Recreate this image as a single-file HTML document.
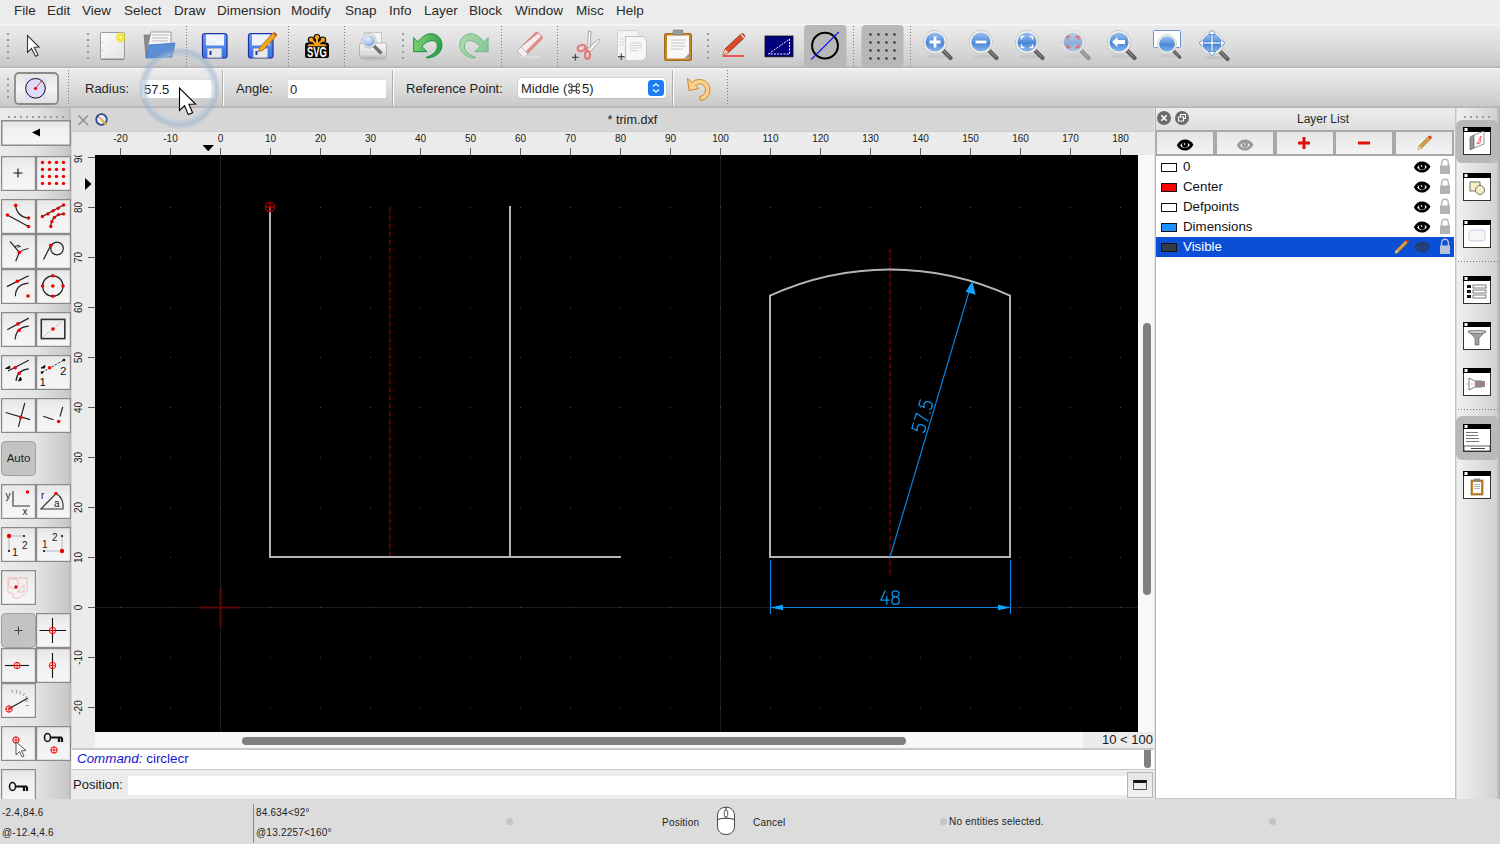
<!DOCTYPE html>
<html><head><meta charset="utf-8">
<style>
*{box-sizing:border-box;margin:0;padding:0}
html,body{width:1500px;height:844px;overflow:hidden;background:#ececec;font-family:"Liberation Sans",sans-serif;color:#222}
.a{position:absolute}
#menubar{left:0;top:0;width:1500px;height:24px;background:#ececec}
#menubar span{position:absolute;top:3px;font-size:13.5px;color:#2a2a2a;white-space:pre}
#tb1{left:0;top:24px;width:1500px;height:44px;background:linear-gradient(#f6f6f6 0px,#f6f6f6 1px,#ebebeb 2px,#dcdcdc 22px,#c9c9c9 42px,#b3b3b3 43px,#b3b3b3 44px)}
#tb2{left:0;top:68px;width:1500px;height:40px;background:linear-gradient(#f4f4f4 0px,#f4f4f4 1px,#ececec 2px,#dcdcdc 20px,#c9c9c9 38px,#b3b3b3 39px,#b3b3b3 40px)}
.vdots{position:absolute;width:2px;background:repeating-linear-gradient(#909090 0 1px,transparent 1px 3px)}
.hdots{position:absolute;height:2px;background:repeating-linear-gradient(90deg,#8e8e8e 0 2px,transparent 2px 6px)}
.lbl{position:absolute;font-size:13px;color:#1e1e1e;white-space:pre}
.inp{position:absolute;background:#fff;border-top:1px solid #d8d8d8;box-shadow:0 0 0 0.5px #d0d0d0}
#left{left:0;top:108px;width:71px;height:691px;background:linear-gradient(90deg,#ebebeb,#e3e3e3 50%,#c9c9c9 95%,#b9b9b9)}
.btn{position:absolute;width:35px;height:35px;border:1.5px solid #8c8c8c;background:linear-gradient(#e9e9e9,#f3f3f3 60%,#f6f6f6)}
#mdi{left:72px;top:108px;width:1083px;height:640px;background:#ebebeb}
#mdititle{left:72px;top:108px;width:1083px;height:24px;background:#d6d6d6;border-bottom:1px solid #cfcfcf}
#canvas{left:95px;top:155px;width:1043px;height:577px;background:#000;overflow:hidden}
#status{left:0;top:799px;width:1500px;height:45px;background:#dcdcdc}
#layers{left:1155px;top:108px;width:300px;height:691px;background:#ececec}
#right{left:1455px;top:108px;width:45px;height:691px;background:linear-gradient(90deg,#c4c4c4 0,#c4c4c4 1px,#f0f0f0 2px,#e2e2e2 45%,#d2d2d2 92%,#a9a9a9 100%)}
</style></head><body>
<div id="menubar" class="a">
<span style="left:14px">File</span><span style="left:47px">Edit</span><span style="left:82px">View</span><span style="left:124px">Select</span><span style="left:174px">Draw</span><span style="left:217px">Dimension</span><span style="left:291px">Modify</span><span style="left:345px">Snap</span><span style="left:389px">Info</span><span style="left:424px">Layer</span><span style="left:469px">Block</span><span style="left:515px">Window</span><span style="left:576px">Misc</span><span style="left:616px">Help</span>
</div>
<div id="tb1" class="a"></div>
<!--TB1--><svg class="a" style="left:0;top:24px" width="1500" height="44" viewBox="0 24 1500 44">
<defs>
<linearGradient id="gPage" x1="0" y1="0" x2="1" y2="1"><stop offset="0" stop-color="#fdfdfd"/><stop offset="1" stop-color="#e2e2e2"/></linearGradient>
<linearGradient id="gBlue" x1="0" y1="0" x2="0" y2="1"><stop offset="0" stop-color="#9cc2f0"/><stop offset="0.45" stop-color="#5b93dc"/><stop offset="0.55" stop-color="#4a86d6"/><stop offset="1" stop-color="#8ab6ec"/></linearGradient>
<linearGradient id="gFloppy" x1="0" y1="0" x2="0" y2="1"><stop offset="0" stop-color="#6aa0f0"/><stop offset="1" stop-color="#3a70e0"/></linearGradient>
<radialGradient id="gGlow"><stop offset="0" stop-color="#ffffc0"/><stop offset="0.45" stop-color="#f0e020"/><stop offset="1" stop-color="#f0e020" stop-opacity="0"/></radialGradient>
<g id="mag"><ellipse cx="3" cy="14.5" rx="11" ry="1.8" fill="#000" opacity="0.06"/><path d="M7.5,8L15.5,16" stroke="#5e5e5e" stroke-width="4.2" stroke-linecap="round"/><path d="M8.5,8.5L14.5,14.8" stroke="#9a9a9a" stroke-width="1" stroke-linecap="round"/><circle cx="0" cy="0" r="11.6" fill="#f3f3ef" stroke="#c4c4bc" stroke-width="0.9"/><circle cx="0" cy="0" r="9.6" fill="url(#gBlue)"/></g>
</defs>
<g fill="#9a9a9a"><rect x="7" y="33" width="2" height="2"/><rect x="7" y="39" width="2" height="2"/><rect x="7" y="45" width="2" height="2"/><rect x="7" y="51" width="2" height="2"/><rect x="7" y="57" width="2" height="2"/>
<rect x="87" y="33" width="2" height="2"/><rect x="87" y="39" width="2" height="2"/><rect x="87" y="45" width="2" height="2"/><rect x="87" y="51" width="2" height="2"/><rect x="87" y="57" width="2" height="2"/>
<rect x="402" y="33" width="2" height="2"/><rect x="402" y="39" width="2" height="2"/><rect x="402" y="45" width="2" height="2"/><rect x="402" y="51" width="2" height="2"/><rect x="402" y="57" width="2" height="2"/>
<rect x="707" y="33" width="2" height="2"/><rect x="707" y="39" width="2" height="2"/><rect x="707" y="45" width="2" height="2"/><rect x="707" y="51" width="2" height="2"/><rect x="707" y="57" width="2" height="2"/>
</g>
<g stroke="#7a7a7a" stroke-width="1" stroke-dasharray="1 2"><path d="M186.5,26V66M288.5,26V66M344.5,26V66M501.5,26V66M557.5,26V66M853.5,26V66M910.5,26V66"/></g>
<!-- pointer -->
<path d="M27.5,35.5V52.5L31.5,48.5 35.5,56.2 38,55 34.2,47.2 39,47Z" fill="#fff" stroke="#333" stroke-width="1.1" stroke-linejoin="miter"/>
<!-- new -->
<rect x="100.5" y="32.5" width="24" height="27" rx="1" fill="url(#gPage)" stroke="#9a9a9a" stroke-width="1"/>
<rect x="101" y="58.5" width="23" height="1.5" fill="#8a8a8a"/>
<circle cx="120.8" cy="37.5" r="6" fill="url(#gGlow)"/>
<g fill="#aaa"><rect x="102" y="42" width="1" height="1"/><rect x="102" y="50" width="1" height="1"/></g>
<!-- open -->
<path d="M144,35H151L152,37V57H146Z" fill="#8a8a8a" stroke="#6a6a6a" stroke-width="0.6"/>
<path d="M151,32H171V46L147,50Z" fill="#f6f6f6" stroke="#888" stroke-width="0.8"/>
<path d="M152,35H169M152,38H168M152,41H168" stroke="#bbb" stroke-width="1"/>
<path d="M149,45L175,43 172,57 146,58Z" fill="#5a8fd6" stroke="#3f74bf" stroke-width="0.8"/>
<!-- save -->
<rect x="202.5" y="33.5" width="24.5" height="24.5" rx="2.5" fill="url(#gFloppy)" stroke="#2030a0" stroke-width="1.2"/>
<rect x="206" y="34.5" width="18" height="11" fill="#eef2fb"/>
<path d="M207,36L221,43" stroke="#fff" stroke-width="1"/>
<rect x="207.5" y="48.5" width="14" height="9" fill="#e8e8e8" stroke="#c0c0c0" stroke-width="0.6"/>
<rect x="209.5" y="51" width="2" height="4" fill="#1a38b0"/>
<!-- save as -->
<rect x="248.5" y="33.5" width="24.5" height="24.5" rx="2.5" fill="url(#gFloppy)" stroke="#2030a0" stroke-width="1.2"/>
<rect x="252" y="34.5" width="18" height="11" fill="#eef2fb"/>
<rect x="253.5" y="48.5" width="14" height="9" fill="#e8e8e8" stroke="#c0c0c0" stroke-width="0.6"/>
<rect x="255.5" y="51" width="2" height="4" fill="#1a38b0"/>
<path d="M258.5,51.5L259.5,47.5 272.5,33.5C273.5,32.5 275,32.5 276,33.5 276.8,34.4 276.8,35.6 276,36.4L263,50.2Z" fill="#f5a623" stroke="#9a4a00" stroke-width="0.7"/>
<path d="M272.5,33.5L276,36.4 276,33.5Z" fill="#e04040"/>
<!-- svg -->
<g stroke="#0a0a0a" stroke-width="4.4" stroke-linecap="round" fill="#0a0a0a">
<path d="M317,45V37.3M317,45L311.1,39.8M317,45L322.9,39.8M307.5,44.8H326.5" fill="none"/>
<circle cx="317" cy="37.3" r="2.4" stroke-width="2"/><circle cx="311.1" cy="39.8" r="2.4" stroke-width="2"/><circle cx="322.9" cy="39.8" r="2.4" stroke-width="2"/>
</g>
<rect x="305" y="43" width="24" height="15" rx="2.6" fill="#0a0a0a"/>
<g stroke="#f9a51a" stroke-width="2" stroke-linecap="round" fill="#f9a51a">
<path d="M317,45V37.3M317,45L311.1,39.8M317,45L322.9,39.8" fill="none"/>
<circle cx="317" cy="37.3" r="2.2" stroke="none"/><circle cx="311.1" cy="39.8" r="2.2" stroke="none"/><circle cx="322.9" cy="39.8" r="2.2" stroke="none"/>
</g>
<path d="M307.2,46.2C308,44.5 309,44.2 310,44.2H324C325,44.2 326,44.5 326.8,46.2Z" fill="#f9a51a"/>
<text transform="translate(317,57.3) scale(0.66,1)" font-family="Liberation Sans" font-weight="bold" font-size="14.2" fill="#fff" text-anchor="middle">SVG</text>
<!-- print preview -->
<defs><radialGradient id="gLens" cx="0.4" cy="0.35" r="0.7"><stop offset="0" stop-color="#e8f0fb"/><stop offset="0.6" stop-color="#a9c6ee"/><stop offset="1" stop-color="#6f9bd8"/></radialGradient>
<linearGradient id="gPr" x1="0" y1="0" x2="0" y2="1"><stop offset="0" stop-color="#f8f8f8"/><stop offset="0.7" stop-color="#e2e2e2"/><stop offset="1" stop-color="#b8b8b8"/></linearGradient></defs>
<rect x="364.5" y="32.5" width="17" height="13" fill="#f4f4f4" stroke="#bcbcbc" stroke-width="0.8"/>
<path d="M359.5,46C359.5,44 360.5,43 362,43H384C385.5,43 386.5,44 386.5,46V55.5C386.5,57 385.5,58 384,58H362C360.5,58 359.5,57 359.5,55.5Z" fill="url(#gPr)" stroke="#a8a8a8" stroke-width="0.8"/>
<path d="M360,52H386" stroke="#c8c8c8" stroke-width="0.8"/>
<ellipse cx="373" cy="59.5" rx="13" ry="1.2" fill="#000" opacity="0.08"/>
<path d="M373.5,45.5L380.5,52.5" stroke="#6e6e6e" stroke-width="3.2" stroke-linecap="round"/>
<circle cx="369" cy="40.8" r="7.2" fill="#f0f0ee" stroke="#a8a8a8" stroke-width="0.7"/>
<circle cx="369" cy="40.8" r="5.6" fill="url(#gLens)"/>
<!-- undo -->
<defs><linearGradient id="gU" x1="0" y1="0" x2="1" y2="0.3"><stop offset="0" stop-color="#8ad67a"/><stop offset="1" stop-color="#2ea44a"/></linearGradient>
<linearGradient id="gR" x1="1" y1="0" x2="0" y2="0.3"><stop offset="0" stop-color="#b0dca8"/><stop offset="1" stop-color="#88c898"/></linearGradient></defs>
<path d="M413.7,37.6L417.6,42.1C421,38 425.5,33.7 430.8,33.7 437,33.7 442,38.5 442,45 442,52 436,57.5 427.2,58L426,57.4C432,55.5 437.4,51.5 437.4,46 437.4,42.5 435,40.6 432,40.6 428,40.6 424.5,43.5 421.8,46.3L426.9,51.7H413.7Z" fill="url(#gU)" stroke="#17843a" stroke-width="0.9" stroke-linejoin="round"/>
<g transform="translate(901.8,0) scale(-1,1)"><path d="M413.7,37.6L417.6,42.1C421,38 425.5,33.7 430.8,33.7 437,33.7 442,38.5 442,45 442,52 436,57.5 427.2,58L426,57.4C432,55.5 437.4,51.5 437.4,46 437.4,42.5 435,40.6 432,40.6 428,40.6 424.5,43.5 421.8,46.3L426.9,51.7H413.7Z" fill="url(#gR)" stroke="#6ab486" stroke-width="0.9" stroke-linejoin="round"/></g>
<!-- eraser -->
<path d="M517,51L535,33C536,32 537.5,32 538.5,33L541.5,36C542.5,37 542.5,38.5 541.5,39.5L523.5,57.5Z" fill="#e49090" stroke="#c06a6a" stroke-width="0.7"/>
<path d="M520.5,47.5L538.5,33.5 541,36 524,53Z" fill="#f5f5f5" opacity="0.9"/>
<path d="M517,51L521,47 528,54 524,58Z" fill="#f0f0f0" stroke="#aaa" stroke-width="0.6"/>
<ellipse cx="530" cy="57" rx="11" ry="1.3" fill="#ddd"/>
<!-- cut -->
<path d="M587,53L588.5,31 591,31.5 590,49M588,48L599,39 600,41 591,51" fill="#f6f6f6" stroke="#999" stroke-width="0.8"/>
<ellipse cx="581.5" cy="48" rx="4" ry="3" fill="none" stroke="#e07a7a" stroke-width="2.2" transform="rotate(-20 581.5 48)"/>
<ellipse cx="587.5" cy="55" rx="2.5" ry="4" fill="none" stroke="#e07a7a" stroke-width="2.2"/>
<path d="M585.5,47.5L588,51" stroke="#e07a7a" stroke-width="2"/>
<path d="M572,57.3H578.6M575.3,54V60.6" stroke="#333" stroke-width="1"/>
<!-- copy -->
<path d="M617.5,30.5H635.5L638.5,33.5V57H617.5Z" fill="#f3f3f3" stroke="#c8c8c8" stroke-width="0.7"/>
<path d="M625.5,36.5H643L646.5,40V57L643,60.8H628C626.5,60.8 625.5,59.8 625.5,58.3Z" fill="#f6f6f6" stroke="#b8b8b8" stroke-width="0.8"/>
<path d="M630,43H642M630,45.5H642M630,48H642M630,50.5H638" stroke="#c4c4c4" stroke-width="0.7"/>
<path d="M619.5,39H624M619.5,42H624M619.5,45H624" stroke="#d0d0d0" stroke-width="0.7"/>
<path d="M618,56.7H624.6M621.3,53.4V60" stroke="#333" stroke-width="1"/>
<!-- paste -->
<rect x="664.5" y="33.5" width="27" height="27" rx="1.5" fill="#c8861c" stroke="#8a5a10" stroke-width="0.8"/>
<rect x="667" y="35.5" width="22" height="23" fill="#f8f8f8"/>
<rect x="673" y="30" width="10" height="5" rx="1" fill="#9a9a9a" stroke="#707070" stroke-width="0.5"/>
<path d="M671,40H686M671,43H685M671,46H686M671,49H683" stroke="#b8b8b8" stroke-width="0.8"/>
<path d="M684,58.5L689,53.5V58.5Z" fill="#9a9a9a"/>
<!-- pencil -->
<path d="M723,55L725,49 740.5,34.5C741.5,33.5 743,33.5 744,34.5 745,35.5 745,37 744,38L728.5,52.5Z" fill="#e04a2a" stroke="#6a2a10" stroke-width="0.8"/>
<path d="M741,34.5L744.5,38" stroke="#ddd" stroke-width="1.5"/>
<path d="M723,55L725,49 728.5,52.5Z" fill="#f0d090"/>
<path d="M722.5,56H744" stroke="#f00" stroke-width="1.2"/>
<!-- dim triangle -->
<rect x="765" y="36" width="28" height="20.8" fill="#00007a" stroke="#111" stroke-width="0.8"/>
<path d="M768.5,54L789.5,39V54Z" fill="none" stroke="#fff" stroke-width="1" stroke-dasharray="2 1.2"/>
<!-- active bgs -->
<rect x="804" y="25" width="42.5" height="42" rx="4" fill="#b8b8b8"/>
<rect x="861.5" y="25" width="42" height="42" rx="4" fill="#b8b8b8"/>
<circle cx="825" cy="45.7" r="12.9" fill="none" stroke="#000" stroke-width="2"/>
<path d="M811.2,59.5L838.8,32" stroke="#1515f0" stroke-width="1.1"/>
<g fill="#111">
<rect x="869.5" y="33.5" width="2" height="2"/><rect x="877.5" y="33.5" width="2" height="2"/><rect x="885.5" y="33.5" width="2" height="2"/><rect x="893.5" y="33.5" width="2" height="2"/>
<rect x="869.5" y="41.5" width="2" height="2"/><rect x="877.5" y="41.5" width="2" height="2"/><rect x="885.5" y="41.5" width="2" height="2"/><rect x="893.5" y="41.5" width="2" height="2"/>
<rect x="869.5" y="49.5" width="2" height="2"/><rect x="877.5" y="49.5" width="2" height="2"/><rect x="885.5" y="49.5" width="2" height="2"/><rect x="893.5" y="49.5" width="2" height="2"/>
<rect x="869.5" y="57.5" width="2" height="2"/><rect x="877.5" y="57.5" width="2" height="2"/><rect x="885.5" y="57.5" width="2" height="2"/><rect x="893.5" y="57.5" width="2" height="2"/>
</g>
<!-- zoom icons -->
<use href="#mag" x="935" y="42"/>
<path d="M935,36.5V47.5M929.5,42H940.5" stroke="#fff" stroke-width="2.8"/>
<use href="#mag" x="981" y="42"/>
<path d="M975.5,42H986.5" stroke="#fff" stroke-width="2.8"/>
<use href="#mag" x="1027" y="42"/>
<path d="M1021.5,39.5V36.5H1024.5M1029.5,36.5H1032.5V39.5M1032.5,44.5V47.5H1029.5M1024.5,47.5H1021.5V44.5" fill="none" stroke="#fff" stroke-width="1.6"/>
<g opacity="0.55"><use href="#mag" x="1073" y="42"/></g>
<path d="M1067.5,39.5V36.5H1070.5M1075.5,36.5H1078.5V39.5M1078.5,44.5V47.5H1075.5M1070.5,47.5H1067.5V44.5" fill="none" stroke="#f06060" stroke-width="1.6"/>
<use href="#mag" x="1119" y="42"/>
<path d="M1112,42L1117.5,37V40H1125V44H1117.5V47Z" fill="#fff"/>
<rect x="1153.5" y="30.5" width="27" height="17" rx="1" fill="#fff" stroke="#5a8ad0" stroke-width="0.9"/>
<g transform="translate(1167,44) scale(0.82)"><use href="#mag" x="0" y="0"/></g>
<use href="#mag" x="1212" y="43"/>
<g stroke="#3c78c8" stroke-width="0.7" fill="#fff" stroke-linejoin="round"><path d="M1211,34H1213V42H1221V44H1213V52H1211V44H1203V42H1211Z"/><path d="M1212,30L1208.5,34.5H1215.5ZM1212,56L1208.5,51.5H1215.5ZM1199,43L1203.5,39.5V46.5ZM1225,43L1220.5,39.5V46.5Z"/></g>
</svg>
<!--/TB1-->
<div id="tb2" class="a"></div>
<!--TB2--><svg class="a" style="left:0;top:68px" width="760" height="40" viewBox="0 68 760 40">
<g fill="#9a9a9a"><rect x="7" y="78" width="2" height="2"/><rect x="7" y="84" width="2" height="2"/><rect x="7" y="90" width="2" height="2"/><rect x="7" y="96" width="2" height="2"/></g>
<path d="M68.5,70V106M727.5,70V106" stroke="#7a7a7a" stroke-width="1" stroke-dasharray="1 2"/>
<path d="M222.5,70V106M392.5,70V106M672.5,70V106" stroke="#b0b0b0" stroke-width="1"/>
<path d="M223.5,70V106M393.5,70V106M673.5,70V106" stroke="#fafafa" stroke-width="1"/>
<defs><linearGradient id="gBtn" x1="0" y1="0" x2="0" y2="1"><stop offset="0" stop-color="#e4e4e4"/><stop offset="0.5" stop-color="#f4f4f4"/><stop offset="1" stop-color="#e0e0e0"/></linearGradient></defs>
<rect x="15" y="73" width="43" height="31" rx="4" fill="url(#gBtn)" stroke="#8a8a8a" stroke-width="1.8"/>
<rect x="25" y="78" width="21" height="21" fill="#dcdcfa"/>
<circle cx="35.5" cy="88.3" r="9.8" fill="none" stroke="#111" stroke-width="1"/>
<path d="M35.5,88.5L42,80.5" stroke="#e82020" stroke-width="0.9"/>
<circle cx="35.5" cy="88.5" r="1.6" fill="#e80000"/>
</svg>
<div class="lbl" style="left:85px;top:81px">Radius:</div>
<div class="a" style="left:142px;top:79px;width:73px;height:19px;background:#fff;border-top:1px solid #dedede"></div>
<div class="lbl" style="left:144px;top:82px">57.5</div>
<div class="lbl" style="left:236px;top:81px">Angle:</div>
<div class="a" style="left:288px;top:79px;width:98px;height:19px;background:#fff;border-top:1px solid #dedede"></div>
<div class="lbl" style="left:290px;top:82px">0</div>
<div class="lbl" style="left:406px;top:81px">Reference Point:</div>
<div class="a" style="left:518px;top:78px;width:148px;height:20px;background:#fff;border-radius:4px;box-shadow:0 0 0 0.6px #c8c8c8,0 0.5px 1px #bbb"></div>
<div class="lbl" style="left:521px;top:81px">Middle (</div><svg class="a" style="left:567.5px;top:83.3px" width="12.2" height="10.5" viewBox="0 0 14 12"><g fill="none" stroke="#1e1e1e" stroke-width="1.1"><path d="M4.5,3.8H9.5V8.8H4.5Z"/><path d="M4.5,3.8V2.6A1.9,1.9 0 1 0 2.6,4.5H4.5M9.5,3.8V2.6A1.9,1.9 0 1 1 11.4,4.5H9.5M4.5,8.8V10A1.9,1.9 0 1 1 2.6,8.1H4.5M9.5,8.8V10A1.9,1.9 0 1 0 11.4,8.1H9.5"/></g></svg><div class="lbl" style="left:582px;top:81px">5)</div>
<div class="a" style="left:648px;top:80px;width:16px;height:16px;background:#1b7cf4;border-radius:3.5px"></div>
<svg class="a" style="left:648px;top:80px" width="16" height="16" viewBox="0 0 16 16"><path d="M5,6.5L8,3.8 11,6.5M5,9.5L8,12.2 11,9.5" fill="none" stroke="#fff" stroke-width="1.2"/></svg>
<svg class="a" style="left:685px;top:75px" width="28" height="28" viewBox="0 0 28 28"><path d="M2.5,3.5L4,15.5 14,13.5 10.5,10.5C11.5,9.5 13,9 14.5,9 18,9 20.5,11.5 20.5,15 20.5,18.5 18,21 14.5,21.5L15.5,25.5C21,25 25,20.5 25,15 25,9 20.5,4.5 14.5,4.5 11.5,4.5 9,5.5 7,7.5Z" fill="#fbd08c" stroke="#c88a30" stroke-width="1"/></svg>
<!--/TB2-->
<div id="left" class="a"></div><!--LEFT--><svg class="a" style="left:0;top:108px" width="72" height="691" viewBox="0 108 72 691"><defs><linearGradient id="lb" x1="0" y1="0" x2="0" y2="1"><stop offset="0" stop-color="#e6e6e6"/><stop offset="0.35" stop-color="#f0f0f0"/><stop offset="1" stop-color="#f6f6f6"/></linearGradient></defs><g fill="#9a9a9a"><rect x="8" y="116" width="2" height="2"/><rect x="14" y="116" width="2" height="2"/><rect x="20" y="116" width="2" height="2"/><rect x="26" y="116" width="2" height="2"/><rect x="32" y="116" width="2" height="2"/><rect x="38" y="116" width="2" height="2"/><rect x="44" y="116" width="2" height="2"/><rect x="50" y="116" width="2" height="2"/><rect x="56" y="116" width="2" height="2"/><rect x="62" y="116" width="2" height="2"/></g><rect x="1.75" y="120.75" width="68.5" height="24.5" fill="url(#lb)" stroke="#8c8c8c" stroke-width="1.5"/><path d="M32,132.5L40,128.5V136.5Z" fill="#000"/><rect x="36.6" y="156.6" width="33.8" height="33.8" fill="url(#lb)" stroke="#8a8a8a" stroke-width="1.2"/><rect x="1.6" y="156.6" width="33.8" height="33.8" fill="url(#lb)" stroke="#8a8a8a" stroke-width="1.2"/><rect x="1.6" y="199.6" width="33.8" height="33.8" fill="url(#lb)" stroke="#8a8a8a" stroke-width="1.2"/><rect x="36.6" y="199.6" width="33.8" height="33.8" fill="url(#lb)" stroke="#8a8a8a" stroke-width="1.2"/><rect x="1.6" y="234.6" width="33.8" height="33.8" fill="url(#lb)" stroke="#8a8a8a" stroke-width="1.2"/><rect x="36.6" y="234.6" width="33.8" height="33.8" fill="url(#lb)" stroke="#8a8a8a" stroke-width="1.2"/><rect x="1.6" y="269.6" width="33.8" height="33.8" fill="url(#lb)" stroke="#8a8a8a" stroke-width="1.2"/><rect x="36.6" y="269.6" width="33.8" height="33.8" fill="url(#lb)" stroke="#8a8a8a" stroke-width="1.2"/><rect x="1.6" y="312.6" width="33.8" height="33.8" fill="url(#lb)" stroke="#8a8a8a" stroke-width="1.2"/><rect x="36.6" y="312.6" width="33.8" height="33.8" fill="url(#lb)" stroke="#8a8a8a" stroke-width="1.2"/><rect x="1.6" y="355.6" width="33.8" height="33.8" fill="url(#lb)" stroke="#8a8a8a" stroke-width="1.2"/><rect x="36.6" y="355.6" width="33.8" height="33.8" fill="url(#lb)" stroke="#8a8a8a" stroke-width="1.2"/><rect x="1.6" y="398.6" width="33.8" height="33.8" fill="url(#lb)" stroke="#8a8a8a" stroke-width="1.2"/><rect x="36.6" y="398.6" width="33.8" height="33.8" fill="url(#lb)" stroke="#8a8a8a" stroke-width="1.2"/><rect x="1.6" y="484.6" width="33.8" height="33.8" fill="url(#lb)" stroke="#8a8a8a" stroke-width="1.2"/><rect x="36.6" y="484.6" width="33.8" height="33.8" fill="url(#lb)" stroke="#8a8a8a" stroke-width="1.2"/><rect x="1.6" y="527.6" width="33.8" height="33.8" fill="url(#lb)" stroke="#8a8a8a" stroke-width="1.2"/><rect x="36.6" y="527.6" width="33.8" height="33.8" fill="url(#lb)" stroke="#8a8a8a" stroke-width="1.2"/><rect x="1.6" y="570.6" width="33.8" height="33.8" fill="url(#lb)" stroke="#8a8a8a" stroke-width="1.2"/><rect x="36.6" y="613.6" width="33.8" height="33.8" fill="url(#lb)" stroke="#8a8a8a" stroke-width="1.2"/><rect x="1.6" y="648.6" width="33.8" height="33.8" fill="url(#lb)" stroke="#8a8a8a" stroke-width="1.2"/><rect x="36.6" y="648.6" width="33.8" height="33.8" fill="url(#lb)" stroke="#8a8a8a" stroke-width="1.2"/><rect x="1.6" y="683.6" width="33.8" height="33.8" fill="url(#lb)" stroke="#8a8a8a" stroke-width="1.2"/><rect x="1.6" y="726.6" width="33.8" height="33.8" fill="url(#lb)" stroke="#8a8a8a" stroke-width="1.2"/><rect x="36.6" y="726.6" width="33.8" height="33.8" fill="url(#lb)" stroke="#8a8a8a" stroke-width="1.2"/><rect x="1.6" y="769.6" width="33.8" height="33.8" fill="url(#lb)" stroke="#8a8a8a" stroke-width="1.2"/><rect x="1.5" y="441.5" width="34" height="34" rx="4" fill="#c3c3c3" stroke="#a0a0a0" stroke-width="1"/><text x="18.5" y="462" font-family="Liberation Sans" font-size="11.5" fill="#222" text-anchor="middle">Auto</text><rect x="1.5" y="613.5" width="34" height="34" rx="4" fill="#c3c3c3" stroke="#a0a0a0" stroke-width="1"/><g transform="translate(36,156)"><circle cx="6.5" cy="6.4" r="1.7" fill="#f00000"/><circle cx="6.5" cy="13.4" r="1.7" fill="#f00000"/><circle cx="6.5" cy="20.4" r="1.7" fill="#f00000"/><circle cx="6.5" cy="27.4" r="1.7" fill="#f00000"/><circle cx="13.5" cy="6.4" r="1.7" fill="#f00000"/><circle cx="13.5" cy="13.4" r="1.7" fill="#f00000"/><circle cx="13.5" cy="20.4" r="1.7" fill="#f00000"/><circle cx="13.5" cy="27.4" r="1.7" fill="#f00000"/><circle cx="20.5" cy="6.4" r="1.7" fill="#f00000"/><circle cx="20.5" cy="13.4" r="1.7" fill="#f00000"/><circle cx="20.5" cy="20.4" r="1.7" fill="#f00000"/><circle cx="20.5" cy="27.4" r="1.7" fill="#f00000"/><circle cx="27.5" cy="6.4" r="1.7" fill="#f00000"/><circle cx="27.5" cy="13.4" r="1.7" fill="#f00000"/><circle cx="27.5" cy="20.4" r="1.7" fill="#f00000"/><circle cx="27.5" cy="27.4" r="1.7" fill="#f00000"/></g><g transform="translate(1,156)"><path d="M12.5,17H21.5M17,12.5V21.5" stroke="#111" stroke-width="1.1"/></g><g transform="translate(1,199)"><path d="M6.4,16L27.5,27.5M14.7,6.4C15,13 20,18.5 27.5,19" stroke="#222" stroke-width="1.2" fill="none"/><circle cx="6.4" cy="16" r="1.8" fill="#f00000"/><circle cx="27.5" cy="27.5" r="1.8" fill="#f00000"/><circle cx="14.7" cy="6.4" r="1.8" fill="#f00000"/><circle cx="27.5" cy="19" r="1.8" fill="#f00000"/></g><g transform="translate(36,199)"><path d="M6.4,17.5L27.6,6M14.8,27.5C15,21 18,16 27.6,14.9" stroke="#222" stroke-width="1.2" fill="none"/><circle cx="6.4" cy="17.5" r="1.7" fill="#f00000"/><circle cx="11.8" cy="14.9" r="1.7" fill="#f00000"/><circle cx="17.2" cy="11.8" r="1.7" fill="#f00000"/><circle cx="22.2" cy="9.2" r="1.7" fill="#f00000"/><circle cx="27.6" cy="6" r="1.7" fill="#f00000"/><circle cx="14.8" cy="27.5" r="1.7" fill="#f00000"/><circle cx="15.9" cy="22.6" r="1.7" fill="#f00000"/><circle cx="18.4" cy="18.4" r="1.7" fill="#f00000"/><circle cx="22.5" cy="15.6" r="1.7" fill="#f00000"/><circle cx="27.6" cy="14.9" r="1.7" fill="#f00000"/></g><g transform="translate(1,234)"><path d="M9,7.3L18.3,18.4 14.7,27.2M18.3,18.4C21,16 24,15 27.5,14.5M13.5,13.5C15,11.5 17.5,11 19.5,13" stroke="#222" stroke-width="1.2" fill="none"/><path d="M16.5,13.5h1" stroke="#111" stroke-width="0.8"/><circle cx="18.3" cy="18.4" r="1.8" fill="#f00000"/></g><g transform="translate(36,234)"><circle cx="21" cy="14.5" r="6.3" stroke="#222" stroke-width="1.2" fill="none"/><path d="M7.5,25.6L14.8,11.2" stroke="#222" stroke-width="1.2" fill="none"/><circle cx="14.8" cy="11.2" r="1.8" fill="#f00000"/></g><g transform="translate(1,269)"><path d="M5.9,17.6L27.5,6.8M14.4,27.3C14.5,20 19,15 27.5,14.2" stroke="#222" stroke-width="1.2" fill="none"/><circle cx="16.4" cy="12.2" r="1.8" fill="#f00000"/><circle cx="27" cy="27" r="1.8" fill="#f00000"/></g><g transform="translate(36,269)"><circle cx="16.8" cy="17" r="10.2" stroke="#222" stroke-width="1.2" fill="none"/><circle cx="16.8" cy="17" r="1.8" fill="#f00000"/><circle cx="16.8" cy="6.8" r="1.8" fill="#f00000"/><circle cx="16.8" cy="27.2" r="1.8" fill="#f00000"/><circle cx="6.6" cy="17" r="1.8" fill="#f00000"/><circle cx="27" cy="17" r="1.8" fill="#f00000"/></g><g transform="translate(1,312)"><path d="M6.2,17.8L27.8,6.1M14.2,27.4C14.5,20 18.5,15 27.8,14.1" stroke="#222" stroke-width="1.2" fill="none"/><circle cx="16.9" cy="11.9" r="1.8" fill="#f00000"/><circle cx="18.2" cy="18.3" r="1.8" fill="#f00000"/></g><g transform="translate(36,312)"><rect x="5.3" y="7.4" width="23.5" height="19.2" fill="none" stroke="#333" stroke-width="1.6"/><path d="M6.5,25.5L27.5,8.5" stroke="#888" stroke-width="0.7" stroke-dasharray="1.5 1.5"/><circle cx="17" cy="17" r="1.8" fill="#f00000"/></g><g transform="translate(1,355)"><path d="M7,16L27.8,5.3M15,25.9C15.5,19 19,15 27.8,13.9" stroke="#222" stroke-width="1.2" fill="none"/><path d="M4.5,13.5L9,11 8.5,13.5Z M17.5,26L19.5,22 20.5,25Z" fill="#111" stroke="#111" stroke-width="1"/><circle cx="14.2" cy="12.8" r="1.8" fill="#f00000"/><circle cx="18.2" cy="18.2" r="1.8" fill="#f00000"/></g><g transform="translate(36,355)"><path d="M6.4,17.1L28,5.1" stroke="#222" stroke-width="1" stroke-dasharray="2 1.6"/><path d="M5,13L9,10.5 8.5,13Z" fill="#111" stroke="#111" stroke-width="1"/><circle cx="6" cy="17.5" r="1.3" fill="#111"/><circle cx="28" cy="5" r="1.3" fill="#111"/><circle cx="13.6" cy="12.8" r="1.8" fill="#f00000"/><text x="3.5" y="31" font-family="Liberation Sans" font-size="11.5" fill="#111">1</text><text x="24" y="20" font-family="Liberation Sans" font-size="11.5" fill="#111">2</text></g><g transform="translate(1,398)"><path d="M4.6,14.5L29.1,21.7M23.8,4.9L17.4,28.9" stroke="#222" stroke-width="1.2" fill="none"/><circle cx="19.8" cy="19.3" r="1.8" fill="#f00000"/></g><g transform="translate(36,398)"><path d="M7.2,18.2L17.6,21.7M26.7,8.9L24,18.7" stroke="#222" stroke-width="1.2" fill="none"/><circle cx="22.7" cy="23.5" r="1.8" fill="#f00000"/></g><g transform="translate(1,484)"><path d="M12,7V22H29" fill="none" stroke="#333" stroke-width="1.1"/><text x="4.5" y="15" font-family="Liberation Sans" font-size="10" fill="#222">y</text><text x="21.5" y="31" font-family="Liberation Sans" font-size="10" fill="#222">x</text><circle cx="26.5" cy="8" r="1.7" fill="#f00000"/></g><g transform="translate(36,484)"><path d="M5,25L20,9.5C25,12 28,18 27,25Z" fill="none" stroke="#333" stroke-width="1.1"/><text x="5" y="14.5" font-family="Liberation Sans" font-size="10" fill="#222">r</text><text x="18" y="23" font-family="Liberation Sans" font-size="10" fill="#222">a</text><circle cx="20" cy="9.5" r="1.7" fill="#f00000"/></g><g transform="translate(1,527)"><path d="M8,9H23M8,9V24" stroke="#aaa" stroke-width="0.8"/><circle cx="8" cy="9" r="2.2" fill="#f00000"/><circle cx="23" cy="9" r="1.1" fill="#111"/><circle cx="8" cy="24" r="1.1" fill="#111"/><text x="11" y="29" font-family="Liberation Sans" font-size="11" fill="#222">1</text><text x="21" y="22" font-family="Liberation Sans" font-size="10" fill="#222">2</text></g><g transform="translate(36,527)"><path d="M8,24H26M26,9V24" stroke="#aaa" stroke-width="0.8"/><circle cx="26" cy="24" r="2.2" fill="#f00000"/><circle cx="26" cy="9" r="1.1" fill="#111"/><circle cx="8" cy="24" r="1.1" fill="#111"/><text x="6" y="20.5" font-family="Liberation Sans" font-size="10" fill="#222">1</text><text x="16" y="14" font-family="Liberation Sans" font-size="10" fill="#222">2</text></g><g transform="translate(1,570)"><g opacity="0.45"><path d="M7,8H26V22L19,28H12V23H7Z" fill="none" stroke="#f06060" stroke-width="0.8"/><circle cx="12.5" cy="13.5" r="5" fill="none" stroke="#f06060" stroke-width="0.8"/><path d="M16,22L23,15V22Z" fill="none" stroke="#f06060" stroke-width="0.8"/></g><circle cx="15" cy="17" r="1.7" fill="#f00000"/></g><g transform="translate(36,613)"><path d="M3.5,17.5H30M16.5,5V30" stroke="#111" stroke-width="1.1"/><circle cx="16.5" cy="17.5" r="3.2" fill="none" stroke="#f00000" stroke-width="1"/><path d="M13.3,17.5H19.7M16.5,14.3V20.7" stroke="#f00000" stroke-width="0.8"/></g><g transform="translate(1,648)"><path d="M4,17.5H28" stroke="#111" stroke-width="1.1"/><circle cx="16" cy="17.5" r="3.2" fill="none" stroke="#f00000" stroke-width="1"/><path d="M12.8,17.5H19.2M16,14.3V20.7" stroke="#f00000" stroke-width="0.8"/></g><g transform="translate(36,648)"><path d="M16.5,5V30" stroke="#111" stroke-width="1.1"/><circle cx="16.5" cy="17.5" r="3.2" fill="none" stroke="#f00000" stroke-width="1"/><path d="M13.3,17.5H19.7M16.5,14.3V20.7" stroke="#f00000" stroke-width="0.8"/></g><g transform="translate(1,683)"><path d="M7.5,26L27,15" stroke="#222" stroke-width="1.2"/><path d="M11,6.5L11.5,10M15,6.5L16,10.5M19.5,8L19,11.5M23.5,10L22,13M26,13L24.5,15M27.5,18H24M28,22.5H24.5" stroke="#888" stroke-width="0.8"/><circle cx="8" cy="26" r="3.2" fill="none" stroke="#f00000" stroke-width="1"/><path d="M4.8,26H11.2M8,22.8V29.2" stroke="#f00000" stroke-width="0.8"/></g><g transform="translate(1,726)"><circle cx="15" cy="14" r="3.2" fill="none" stroke="#f00000" stroke-width="1"/><path d="M11.8,14H18.2M15,10.8V17.2" stroke="#f00000" stroke-width="0.8"/><path d="M15,16V29L18.5,25.5 21,31 23,30 20.5,24.8 25,24.5Z" fill="#fff" stroke="#333" stroke-width="0.8"/></g><g transform="translate(36,726)"><g transform="translate(8,7)"><ellipse cx="3.5" cy="4.5" rx="3" ry="4" fill="none" stroke="#111" stroke-width="1.6"/><path d="M6.5,4.5H18M15,4.5V9M18,4.5V9" stroke="#111" stroke-width="2.2"/></g><circle cx="18" cy="24" r="3.2" fill="none" stroke="#f00000" stroke-width="1"/><path d="M14.8,24H21.2M18,20.8V27.2" stroke="#f00000" stroke-width="0.8"/></g><g transform="translate(1,769)"><g transform="translate(8,13)"><ellipse cx="3.5" cy="4.5" rx="3" ry="4" fill="none" stroke="#111" stroke-width="1.6"/><path d="M6.5,4.5H18M15,4.5V9M18,4.5V9" stroke="#111" stroke-width="2.2"/></g></g><g transform="translate(1,613)"><path d="M13.5,17.5H21.5M17.5,13.5V21.5" stroke="#444" stroke-width="1"/></g></svg><!--/LEFT-->
<div id="mdi" class="a"></div>
<div id="mdititle" class="a"></div>
<svg class="a" style="left:95px;top:155px" width="1043" height="577" viewBox="95 155 1043 577">
<rect x="95" y="155" width="1043" height="577" fill="#000"/>
<g fill="#1b1b1b" shape-rendering="crispEdges"><rect x="220" y="155" width="1" height="577"/><rect x="720" y="155" width="1" height="577"/><rect x="95" y="607" width="1043" height="1"/></g>
<path fill="#4a4a4a" shape-rendering="crispEdges" d="M120,157h1v1h-1zM120,207h1v1h-1zM120,257h1v1h-1zM120,307h1v1h-1zM120,357h1v1h-1zM120,407h1v1h-1zM120,457h1v1h-1zM120,507h1v1h-1zM120,557h1v1h-1zM120,607h1v1h-1zM120,657h1v1h-1zM120,707h1v1h-1zM170,157h1v1h-1zM170,207h1v1h-1zM170,257h1v1h-1zM170,307h1v1h-1zM170,357h1v1h-1zM170,407h1v1h-1zM170,457h1v1h-1zM170,507h1v1h-1zM170,557h1v1h-1zM170,607h1v1h-1zM170,657h1v1h-1zM170,707h1v1h-1zM220,157h1v1h-1zM220,207h1v1h-1zM220,257h1v1h-1zM220,307h1v1h-1zM220,357h1v1h-1zM220,407h1v1h-1zM220,457h1v1h-1zM220,507h1v1h-1zM220,557h1v1h-1zM220,607h1v1h-1zM220,657h1v1h-1zM220,707h1v1h-1zM270,157h1v1h-1zM270,207h1v1h-1zM270,257h1v1h-1zM270,307h1v1h-1zM270,357h1v1h-1zM270,407h1v1h-1zM270,457h1v1h-1zM270,507h1v1h-1zM270,557h1v1h-1zM270,607h1v1h-1zM270,657h1v1h-1zM270,707h1v1h-1zM320,157h1v1h-1zM320,207h1v1h-1zM320,257h1v1h-1zM320,307h1v1h-1zM320,357h1v1h-1zM320,407h1v1h-1zM320,457h1v1h-1zM320,507h1v1h-1zM320,557h1v1h-1zM320,607h1v1h-1zM320,657h1v1h-1zM320,707h1v1h-1zM370,157h1v1h-1zM370,207h1v1h-1zM370,257h1v1h-1zM370,307h1v1h-1zM370,357h1v1h-1zM370,407h1v1h-1zM370,457h1v1h-1zM370,507h1v1h-1zM370,557h1v1h-1zM370,607h1v1h-1zM370,657h1v1h-1zM370,707h1v1h-1zM420,157h1v1h-1zM420,207h1v1h-1zM420,257h1v1h-1zM420,307h1v1h-1zM420,357h1v1h-1zM420,407h1v1h-1zM420,457h1v1h-1zM420,507h1v1h-1zM420,557h1v1h-1zM420,607h1v1h-1zM420,657h1v1h-1zM420,707h1v1h-1zM470,157h1v1h-1zM470,207h1v1h-1zM470,257h1v1h-1zM470,307h1v1h-1zM470,357h1v1h-1zM470,407h1v1h-1zM470,457h1v1h-1zM470,507h1v1h-1zM470,557h1v1h-1zM470,607h1v1h-1zM470,657h1v1h-1zM470,707h1v1h-1zM520,157h1v1h-1zM520,207h1v1h-1zM520,257h1v1h-1zM520,307h1v1h-1zM520,357h1v1h-1zM520,407h1v1h-1zM520,457h1v1h-1zM520,507h1v1h-1zM520,557h1v1h-1zM520,607h1v1h-1zM520,657h1v1h-1zM520,707h1v1h-1zM570,157h1v1h-1zM570,207h1v1h-1zM570,257h1v1h-1zM570,307h1v1h-1zM570,357h1v1h-1zM570,407h1v1h-1zM570,457h1v1h-1zM570,507h1v1h-1zM570,557h1v1h-1zM570,607h1v1h-1zM570,657h1v1h-1zM570,707h1v1h-1zM620,157h1v1h-1zM620,207h1v1h-1zM620,257h1v1h-1zM620,307h1v1h-1zM620,357h1v1h-1zM620,407h1v1h-1zM620,457h1v1h-1zM620,507h1v1h-1zM620,557h1v1h-1zM620,607h1v1h-1zM620,657h1v1h-1zM620,707h1v1h-1zM670,157h1v1h-1zM670,207h1v1h-1zM670,257h1v1h-1zM670,307h1v1h-1zM670,357h1v1h-1zM670,407h1v1h-1zM670,457h1v1h-1zM670,507h1v1h-1zM670,557h1v1h-1zM670,607h1v1h-1zM670,657h1v1h-1zM670,707h1v1h-1zM720,157h1v1h-1zM720,207h1v1h-1zM720,257h1v1h-1zM720,307h1v1h-1zM720,357h1v1h-1zM720,407h1v1h-1zM720,457h1v1h-1zM720,507h1v1h-1zM720,557h1v1h-1zM720,607h1v1h-1zM720,657h1v1h-1zM720,707h1v1h-1zM770,157h1v1h-1zM770,207h1v1h-1zM770,257h1v1h-1zM770,307h1v1h-1zM770,357h1v1h-1zM770,407h1v1h-1zM770,457h1v1h-1zM770,507h1v1h-1zM770,557h1v1h-1zM770,607h1v1h-1zM770,657h1v1h-1zM770,707h1v1h-1zM820,157h1v1h-1zM820,207h1v1h-1zM820,257h1v1h-1zM820,307h1v1h-1zM820,357h1v1h-1zM820,407h1v1h-1zM820,457h1v1h-1zM820,507h1v1h-1zM820,557h1v1h-1zM820,607h1v1h-1zM820,657h1v1h-1zM820,707h1v1h-1zM870,157h1v1h-1zM870,207h1v1h-1zM870,257h1v1h-1zM870,307h1v1h-1zM870,357h1v1h-1zM870,407h1v1h-1zM870,457h1v1h-1zM870,507h1v1h-1zM870,557h1v1h-1zM870,607h1v1h-1zM870,657h1v1h-1zM870,707h1v1h-1zM920,157h1v1h-1zM920,207h1v1h-1zM920,257h1v1h-1zM920,307h1v1h-1zM920,357h1v1h-1zM920,407h1v1h-1zM920,457h1v1h-1zM920,507h1v1h-1zM920,557h1v1h-1zM920,607h1v1h-1zM920,657h1v1h-1zM920,707h1v1h-1zM970,157h1v1h-1zM970,207h1v1h-1zM970,257h1v1h-1zM970,307h1v1h-1zM970,357h1v1h-1zM970,407h1v1h-1zM970,457h1v1h-1zM970,507h1v1h-1zM970,557h1v1h-1zM970,607h1v1h-1zM970,657h1v1h-1zM970,707h1v1h-1zM1020,157h1v1h-1zM1020,207h1v1h-1zM1020,257h1v1h-1zM1020,307h1v1h-1zM1020,357h1v1h-1zM1020,407h1v1h-1zM1020,457h1v1h-1zM1020,507h1v1h-1zM1020,557h1v1h-1zM1020,607h1v1h-1zM1020,657h1v1h-1zM1020,707h1v1h-1zM1070,157h1v1h-1zM1070,207h1v1h-1zM1070,257h1v1h-1zM1070,307h1v1h-1zM1070,357h1v1h-1zM1070,407h1v1h-1zM1070,457h1v1h-1zM1070,507h1v1h-1zM1070,557h1v1h-1zM1070,607h1v1h-1zM1070,657h1v1h-1zM1070,707h1v1h-1zM1120,157h1v1h-1zM1120,207h1v1h-1zM1120,257h1v1h-1zM1120,307h1v1h-1zM1120,357h1v1h-1zM1120,407h1v1h-1zM1120,457h1v1h-1zM1120,507h1v1h-1zM1120,557h1v1h-1zM1120,607h1v1h-1zM1120,657h1v1h-1zM1120,707h1v1h-1z"/>
<g stroke="#5c0808" stroke-width="2" fill="none"><path d="M220.5,587V627M200,607.5H240"/></g>
<g stroke="#5e0000" stroke-width="2" fill="none" stroke-dasharray="4.5 1.2 1 1.5">
<path d="M390,207V557"/><path d="M890,249V577"/></g>
<g stroke="#b4b4b4" stroke-width="2" fill="none" stroke-linecap="square">
<path d="M270,207V557H620M510,207V557"/>
<path d="M770,557V295.7A287.5,287.5 0 0 1 1010,295.7V557H770Z"/>
</g>
<g stroke="#a00000" stroke-width="1.3" fill="none"><circle cx="270" cy="207" r="4.5"/><path d="M266,207H274M270,203V211"/></g>
<g stroke="#0a86e2" stroke-width="1.15" fill="none">
<path d="M770.5,560V614M1010.5,560V614M776,607.5H1004"/>
<path d="M890,557L969,292"/>
</g>
<g fill="#12a2ff">
<path d="M770,607.5L783,604.8V610.2Z"/><path d="M1011,607.5L998,604.8V610.2Z"/>
<path d="M972.3,281.3L975.6,294.8 965.6,291.8Z"/>
</g>
<g stroke="#0c96f0" stroke-width="1.25" fill="none" stroke-linecap="round" stroke-linejoin="round">
<g transform="translate(890,604.4)">
<path d="M-5,-13.5L-9.3,-4.2H-1M-3.2,-8V0"/>
<path d="M5.5,-7.6C2.8,-7.6 2,-9.5 2,-10.6 2,-12.3 3.4,-13.6 5.5,-13.6 7.6,-13.6 8.9,-12.3 8.9,-10.6 8.9,-9.5 8.2,-7.6 5.5,-7.6 2.4,-7.6 1.8,-5.2 1.8,-3.6 1.8,-1.4 3.6,0 5.5,0 7.4,0 9.2,-1.4 9.2,-3.6 9.2,-5.2 8.6,-7.6 5.5,-7.6Z"/>
</g>
<g transform="translate(931,419) rotate(-73.45) translate(0.3,-2.4)">
<path d="M-9,-13.3H-14.6L-15.2,-7.3C-14.2,-8.2 -13,-8.5 -12,-8.5 -9.8,-8.5 -8.5,-6.8 -8.5,-4.5 -8.5,-1.8 -10,0 -12.2,0 -13.6,0 -14.8,-0.6 -15.4,-1.6"/>
<path d="M-5,-13.3H1L-3,0"/>
<path d="M4.6,-0.4H5.4"/>
<path d="M15,-13.3H9.4L8.8,-7.3C9.8,-8.2 11,-8.5 12,-8.5 14.2,-8.5 15.5,-6.8 15.5,-4.5 15.5,-1.8 14,0 11.8,0 10.4,0 9.2,-0.6 8.6,-1.6"/>
</g>
</g>
</svg>
<svg class="a" style="left:72px;top:132px" width="1083" height="616" viewBox="72 132 1083 616">
<g font-family="Liberation Sans" font-size="10" fill="#1a1a1a" text-anchor="middle"><text x="120.5" y="142">-20</text><text x="170.5" y="142">-10</text><text x="220.5" y="142">0</text><text x="270.5" y="142">10</text><text x="320.5" y="142">20</text><text x="370.5" y="142">30</text><text x="420.5" y="142">40</text><text x="470.5" y="142">50</text><text x="520.5" y="142">60</text><text x="570.5" y="142">70</text><text x="620.5" y="142">80</text><text x="670.5" y="142">90</text><text x="720.5" y="142">100</text><text x="770.5" y="142">110</text><text x="820.5" y="142">120</text><text x="870.5" y="142">130</text><text x="920.5" y="142">140</text><text x="970.5" y="142">150</text><text x="1020.5" y="142">160</text><text x="1070.5" y="142">170</text><text x="1120.5" y="142">180</text></g>
<path stroke="#5a5a5a" stroke-width="1" d="M120.5,148V155M170.5,148V155M220.5,148V155M270.5,148V155M320.5,148V155M370.5,148V155M420.5,148V155M470.5,148V155M520.5,148V155M570.5,148V155M620.5,148V155M670.5,148V155M720.5,148V155M770.5,148V155M820.5,148V155M870.5,148V155M920.5,148V155M970.5,148V155M1020.5,148V155M1070.5,148V155M1120.5,148V155M88,707.5H95M88,657.5H95M88,607.5H95M88,557.5H95M88,507.5H95M88,457.5H95M88,407.5H95M88,357.5H95M88,307.5H95M88,257.5H95M88,207.5H95M88,157.5H95"/>
<clipPath id="vclip"><rect x="72" y="155" width="23" height="600"/></clipPath><g clip-path="url(#vclip)" font-family="Liberation Sans" font-size="10" fill="#1a1a1a" text-anchor="middle"><text transform="translate(81.5,707.5) rotate(-90)" x="0" y="0">-20</text><text transform="translate(81.5,657.5) rotate(-90)" x="0" y="0">-10</text><text transform="translate(81.5,607.5) rotate(-90)" x="0" y="0">0</text><text transform="translate(81.5,557.5) rotate(-90)" x="0" y="0">10</text><text transform="translate(81.5,507.5) rotate(-90)" x="0" y="0">20</text><text transform="translate(81.5,457.5) rotate(-90)" x="0" y="0">30</text><text transform="translate(81.5,407.5) rotate(-90)" x="0" y="0">40</text><text transform="translate(81.5,357.5) rotate(-90)" x="0" y="0">50</text><text transform="translate(81.5,307.5) rotate(-90)" x="0" y="0">60</text><text transform="translate(81.5,257.5) rotate(-90)" x="0" y="0">70</text><text transform="translate(81.5,207.5) rotate(-90)" x="0" y="0">80</text><text transform="translate(81.5,157.5) rotate(-90)" x="0" y="0">90</text></g>
<path d="M202.5,145H214L208.2,151.2Z" fill="#000"/>
<path d="M85,178V190L91.5,184Z" fill="#000"/>
</svg>

<div class="a" style="left:95px;top:732px;width:1060px;height:16px;background:#f7f7f7"></div>
<div class="a" style="left:1138px;top:155px;width:16px;height:577px;background:#f8f8f8;border-left:1px solid #fdfdfd"></div>
<div class="a" style="left:242px;top:737px;width:664px;height:8px;border-radius:4px;background:#7f7f7f"></div>
<div class="a" style="left:1143px;top:323px;width:8px;height:272px;border-radius:4px;background:#7f7f7f"></div>
<div class="a" style="left:1083px;top:732px;width:72px;height:16px;background:#ebebeb;font-size:13px;line-height:16px;text-align:right;padding-right:2px;color:#1a1a1a">10 &lt; 100</div>
<svg class="a" style="left:76px;top:113px" width="40" height="16" viewBox="0 0 40 16">
<path d="M2.5,2.5L12,12M12,2.5L2.5,12" stroke="#8a8a8a" stroke-width="1.2"/>
<circle cx="25.5" cy="6.5" r="5.3" fill="#e8eef6" stroke="#2d4c8a" stroke-width="1.8"/>
<path d="M22,3.5L26,7" stroke="#d24040" stroke-width="0.8"/>
<path d="M25,6L30,11.5" stroke="#e8b020" stroke-width="2"/>
</svg>
<div class="a" style="left:607.5px;top:112.5px;font-size:12.6px;color:#1a1a1a;white-space:pre">* trim.dxf</div>
<div class="a" style="left:72px;top:748px;width:1083px;height:2px;background:#c9c9c9"></div>
<div class="a" style="left:72px;top:750px;width:1083px;height:20px;background:#fff;border-bottom:1px solid #c6c6c6"></div>
<div class="a" style="left:1144px;top:750px;width:7px;height:18px;border-radius:0 0 3.5px 3.5px;background:#808080"></div>
<div class="a" style="left:77px;top:751px;font-size:13.4px;color:#1515d0;white-space:pre"><i>Command:</i> circlecr</div>
<div class="a" style="left:72px;top:771px;width:1083px;height:28px;background:#ececec"></div>
<div class="a" style="left:73px;top:777px;font-size:13px;color:#1a1a1a">Position:</div>
<div class="a" style="left:128px;top:776px;width:1000px;height:19px;background:#fff"></div>
<div class="a" style="left:1127px;top:772px;width:26px;height:26px;border:1px solid #b5b5b5;background:linear-gradient(#e4e4e4,#f2f2f2)"></div>
<div class="a" style="left:1133px;top:780px;width:14px;height:10px;border:1px solid #555;border-top:3px solid #111;background:#eee"></div>
<div class="a" style="left:71px;top:108px;width:1px;height:640px;background:#d6d6d6"></div>
<div class="a" style="left:1154px;top:108px;width:1px;height:691px;background:#e2e2e2"></div>
<div id="layers" class="a">
<div class="a" style="left:0;top:0;width:300px;height:23px;background:linear-gradient(#ececec,#dedede)"></div>
<div class="a" style="left:2px;top:3px;width:14px;height:14px;border-radius:50%;background:#6b6b6b"></div>
<svg class="a" style="left:2px;top:3px" width="14" height="14" viewBox="0 0 14 14"><path d="M4.3,4.3L9.7,9.7M9.7,4.3L4.3,9.7" stroke="#fff" stroke-width="1.6"/></svg>
<div class="a" style="left:20px;top:3px;width:14px;height:14px;border-radius:50%;background:#6b6b6b"></div>
<svg class="a" style="left:20px;top:3px" width="14" height="14" viewBox="0 0 14 14"><rect x="5.5" y="3.5" width="5" height="4" fill="none" stroke="#fff" stroke-width="1"/><rect x="3.5" y="6" width="5" height="4" fill="#6b6b6b" stroke="#fff" stroke-width="1"/></svg>
<div class="a" style="left:142px;top:4px;font-size:12px;color:#2a2a2a;white-space:pre">Layer List</div>
<div class="a" style="left:1px;top:22px;width:298px;height:26px;background:#a9a9a9"></div>
<div class="a" style="left:2.0px;top:24px;width:56px;height:22px;background:linear-gradient(#e6e6e6,#f3f3f3)"></div><div class="a" style="left:61.8px;top:24px;width:56px;height:22px;background:linear-gradient(#e6e6e6,#f3f3f3)"></div><div class="a" style="left:121.6px;top:24px;width:56px;height:22px;background:linear-gradient(#e6e6e6,#f3f3f3)"></div><div class="a" style="left:181.4px;top:24px;width:56px;height:22px;background:linear-gradient(#e6e6e6,#f3f3f3)"></div><div class="a" style="left:241.2px;top:24px;width:56px;height:22px;background:linear-gradient(#e6e6e6,#f3f3f3)"></div><div class="a" style="left:21px;top:29px"><svg width="18" height="12" viewBox="0 0 18 12"><path d="M0.8,6.3C2.8,2.2 5.8,0.5 9,0.5 12.4,0.5 15.2,2 17.4,5.6 15.4,9.8 12.4,11.6 9,11.6 5.6,11.6 2.8,10.2 0.8,6.3Z" fill="#000"/><path d="M4.2,6.4C5.6,4.5 7.2,3.6 9,3.6 10.8,3.6 12.5,4.4 13.8,6 12.5,8.1 10.8,9 9,9 7.2,9 5.6,8.3 4.2,6.4Z" fill="#fff"/><circle cx="9" cy="5.7" r="3" fill="#000"/><path d="M8.2,3.9L8.9,6.1" stroke="#fff" stroke-width="0.9"/></svg></div>
<div class="a" style="left:81px;top:29px"><svg width="18" height="12" viewBox="0 0 18 12"><path d="M0.8,6.3C2.8,2.2 5.8,0.5 9,0.5 12.4,0.5 15.2,2 17.4,5.6 15.4,9.8 12.4,11.6 9,11.6 5.6,11.6 2.8,10.2 0.8,6.3Z" fill="#9a9a9a"/><path d="M4.2,6.4C5.6,4.5 7.2,3.6 9,3.6 10.8,3.6 12.5,4.4 13.8,6 12.5,8.1 10.8,9 9,9 7.2,9 5.6,8.3 4.2,6.4Z" fill="#f0f0f0"/><circle cx="9" cy="5.7" r="3" fill="#9a9a9a"/><path d="M8.2,3.9L8.9,6.1" stroke="#f0f0f0" stroke-width="0.9"/></svg></div>
<svg class="a" style="left:142px;top:28px" width="14" height="14" viewBox="0 0 14 14"><path d="M7,1V13M1,7H13" stroke="#e01010" stroke-width="3"/></svg>
<svg class="a" style="left:202px;top:28px" width="14" height="14" viewBox="0 0 14 14"><path d="M1,7H13" stroke="#e01010" stroke-width="3"/></svg>
<div class="a" style="left:261px;top:27px"><svg width="16" height="16" viewBox="0 0 16 16"><path d="M2,14.5L3,11 12.6,1.4C13.3,0.8 14.4,1 15,1.6 15.5,2.2 15.5,3 15,3.6L5.4,13.2Z" fill="#d8a040" stroke="#8a5a10" stroke-width="0.6"/><path d="M12.3,1.7L14.7,4.1 15,3.6C15.5,3 15.5,2.2 15,1.6 14.4,1 13.3,0.8 12.6,1.4Z" fill="#e02020"/><path d="M2,14.5L3,11 5.4,13.2Z" fill="#f0d8a8"/></svg></div>
<div class="a" style="left:1px;top:48px;width:299px;height:643px;background:#fff;border-bottom:1px solid #c8c8c8"></div>
</div><div class="a" style="left:1156px;top:237px;width:1297px"></div><div class="a" style="left:1156px;top:157px;width:298px;height:20px;"></div><div class="a" style="left:1161px;top:163px;width:16px;height:9px;background:#fff;border:1.2px solid #111"></div><div class="a" style="left:1183px;top:159px;font-size:13.3px;color:#111;white-space:pre">0</div><div class="a" style="left:1413px;top:159px"><svg width="18" height="12" viewBox="0 0 18 12"><path d="M0.8,6.3C2.8,2.2 5.8,0.5 9,0.5 12.4,0.5 15.2,2 17.4,5.6 15.4,9.8 12.4,11.6 9,11.6 5.6,11.6 2.8,10.2 0.8,6.3Z" fill="#000"/><path d="M4.2,6.4C5.6,4.5 7.2,3.6 9,3.6 10.8,3.6 12.5,4.4 13.8,6 12.5,8.1 10.8,9 9,9 7.2,9 5.6,8.3 4.2,6.4Z" fill="#fff"/><circle cx="9" cy="5.7" r="3" fill="#000"/><path d="M8.2,3.9L8.9,6.1" stroke="#fff" stroke-width="0.9"/></svg></div><div class="a" style="left:1439px;top:158px"><svg width="12" height="17" viewBox="0 0 12 17"><path d="M2.6,8V5.2C2.6,2.8 4,1.2 6,1.2 8,1.2 9.4,2.8 9.4,5.2V8" fill="none" stroke="#b3b3b3" stroke-width="1.4"/><rect x="1" y="7.5" width="10" height="8.5" fill="#b3b3b3"/></svg></div><div class="a" style="left:1156px;top:177px;width:298px;height:20px;"></div><div class="a" style="left:1161px;top:183px;width:16px;height:9px;background:#ff0000;border:1.2px solid #111"></div><div class="a" style="left:1183px;top:179px;font-size:13.3px;color:#111;white-space:pre">Center</div><div class="a" style="left:1413px;top:179px"><svg width="18" height="12" viewBox="0 0 18 12"><path d="M0.8,6.3C2.8,2.2 5.8,0.5 9,0.5 12.4,0.5 15.2,2 17.4,5.6 15.4,9.8 12.4,11.6 9,11.6 5.6,11.6 2.8,10.2 0.8,6.3Z" fill="#000"/><path d="M4.2,6.4C5.6,4.5 7.2,3.6 9,3.6 10.8,3.6 12.5,4.4 13.8,6 12.5,8.1 10.8,9 9,9 7.2,9 5.6,8.3 4.2,6.4Z" fill="#fff"/><circle cx="9" cy="5.7" r="3" fill="#000"/><path d="M8.2,3.9L8.9,6.1" stroke="#fff" stroke-width="0.9"/></svg></div><div class="a" style="left:1439px;top:178px"><svg width="12" height="17" viewBox="0 0 12 17"><path d="M2.6,8V5.2C2.6,2.8 4,1.2 6,1.2 8,1.2 9.4,2.8 9.4,5.2V8" fill="none" stroke="#b3b3b3" stroke-width="1.4"/><rect x="1" y="7.5" width="10" height="8.5" fill="#b3b3b3"/></svg></div><div class="a" style="left:1156px;top:197px;width:298px;height:20px;"></div><div class="a" style="left:1161px;top:203px;width:16px;height:9px;background:#fff;border:1.2px solid #111"></div><div class="a" style="left:1183px;top:199px;font-size:13.3px;color:#111;white-space:pre">Defpoints</div><div class="a" style="left:1413px;top:199px"><svg width="18" height="12" viewBox="0 0 18 12"><path d="M0.8,6.3C2.8,2.2 5.8,0.5 9,0.5 12.4,0.5 15.2,2 17.4,5.6 15.4,9.8 12.4,11.6 9,11.6 5.6,11.6 2.8,10.2 0.8,6.3Z" fill="#000"/><path d="M4.2,6.4C5.6,4.5 7.2,3.6 9,3.6 10.8,3.6 12.5,4.4 13.8,6 12.5,8.1 10.8,9 9,9 7.2,9 5.6,8.3 4.2,6.4Z" fill="#fff"/><circle cx="9" cy="5.7" r="3" fill="#000"/><path d="M8.2,3.9L8.9,6.1" stroke="#fff" stroke-width="0.9"/></svg></div><div class="a" style="left:1439px;top:198px"><svg width="12" height="17" viewBox="0 0 12 17"><path d="M2.6,8V5.2C2.6,2.8 4,1.2 6,1.2 8,1.2 9.4,2.8 9.4,5.2V8" fill="none" stroke="#b3b3b3" stroke-width="1.4"/><rect x="1" y="7.5" width="10" height="8.5" fill="#b3b3b3"/></svg></div><div class="a" style="left:1156px;top:217px;width:298px;height:20px;"></div><div class="a" style="left:1161px;top:223px;width:16px;height:9px;background:#1e90ff;border:1.2px solid #111"></div><div class="a" style="left:1183px;top:219px;font-size:13.3px;color:#111;white-space:pre">Dimensions</div><div class="a" style="left:1413px;top:219px"><svg width="18" height="12" viewBox="0 0 18 12"><path d="M0.8,6.3C2.8,2.2 5.8,0.5 9,0.5 12.4,0.5 15.2,2 17.4,5.6 15.4,9.8 12.4,11.6 9,11.6 5.6,11.6 2.8,10.2 0.8,6.3Z" fill="#000"/><path d="M4.2,6.4C5.6,4.5 7.2,3.6 9,3.6 10.8,3.6 12.5,4.4 13.8,6 12.5,8.1 10.8,9 9,9 7.2,9 5.6,8.3 4.2,6.4Z" fill="#fff"/><circle cx="9" cy="5.7" r="3" fill="#000"/><path d="M8.2,3.9L8.9,6.1" stroke="#fff" stroke-width="0.9"/></svg></div><div class="a" style="left:1439px;top:218px"><svg width="12" height="17" viewBox="0 0 12 17"><path d="M2.6,8V5.2C2.6,2.8 4,1.2 6,1.2 8,1.2 9.4,2.8 9.4,5.2V8" fill="none" stroke="#b3b3b3" stroke-width="1.4"/><rect x="1" y="7.5" width="10" height="8.5" fill="#b3b3b3"/></svg></div><div class="a" style="left:1156px;top:237px;width:298px;height:20px;background:#0a4fd6;"></div><div class="a" style="left:1161px;top:243px;width:16px;height:9px;background:#333a48;border:1.2px solid #111"></div><div class="a" style="left:1183px;top:239px;font-size:13.3px;color:#fff;white-space:pre">Visible</div><div class="a" style="left:1393px;top:239px"><svg width="16" height="16" viewBox="0 0 16 16"><path d="M2,14.5L3,11 12.6,1.4C13.3,0.8 14.4,1 15,1.6 15.5,2.2 15.5,3 15,3.6L5.4,13.2Z" fill="#d8a040" stroke="#8a5a10" stroke-width="0.6"/><path d="M12.3,1.7L14.7,4.1 15,3.6C15.5,3 15.5,2.2 15,1.6 14.4,1 13.3,0.8 12.6,1.4Z" fill="#e02020"/><path d="M2,14.5L3,11 5.4,13.2Z" fill="#f0d8a8"/></svg></div><div class="a" style="left:1413px;top:239px"><svg width="18" height="12" viewBox="0 0 18 12"><path d="M0.8,6.3C2.8,2.2 5.8,0.5 9,0.5 12.4,0.5 15.2,2 17.4,5.6 15.4,9.8 12.4,11.6 9,11.6 5.6,11.6 2.8,10.2 0.8,6.3Z" fill="#263d6e"/><path d="M4.2,6.4C5.6,4.5 7.2,3.6 9,3.6 10.8,3.6 12.5,4.4 13.8,6 12.5,8.1 10.8,9 9,9 7.2,9 5.6,8.3 4.2,6.4Z" fill="#0a4fd6"/><circle cx="9" cy="5.7" r="3" fill="#263d6e"/><path d="M8.2,3.9L8.9,6.1" stroke="#0a4fd6" stroke-width="0.9"/></svg></div><div class="a" style="left:1439px;top:238px"><svg width="12" height="17" viewBox="0 0 12 17"><path d="M2.6,8V5.2C2.6,2.8 4,1.2 6,1.2 8,1.2 9.4,2.8 9.4,5.2V8" fill="none" stroke="#b7c3d8" stroke-width="1.4"/><rect x="1" y="7.5" width="10" height="8.5" fill="#b7c3d8"/></svg></div>
<div id="right" class="a"></div><div class="hdots" style="left:1464px;top:116px;width:30px;background:repeating-linear-gradient(90deg,#9a9a9a 0 2px,transparent 2px 6px)"></div><div class="a" style="left:1456px;top:120px;width:43px;height:43px;border-radius:6px;background:#b9b9b9"></div><div class="a" style="left:1456px;top:416px;width:43px;height:44px;border-radius:6px;background:#b9b9b9"></div><div class="hdots" style="left:1458px;top:261px;width:40px;height:1px;background:repeating-linear-gradient(90deg,#777 0 1px,transparent 1px 3px)"></div><div class="hdots" style="left:1458px;top:409px;width:40px;height:1px;background:repeating-linear-gradient(90deg,#777 0 1px,transparent 1px 3px)"></div><svg class="a" style="left:1463px;top:127px" width="28" height="28" viewBox="0 0 28 28"><rect x="0.5" y="0.5" width="27" height="27" fill="#fff" stroke="#333" stroke-width="1"/><rect x="0" y="0" width="28" height="5" fill="#000"/><rect x="1.5" y="1" width="3" height="3" fill="#fff"/><path d="M7,10L11,8V21L7,23Z" fill="#999" stroke="#555" stroke-width="0.6"/><path d="M11,8L21,4V17L11,21Z" fill="#fff" stroke="#666" stroke-width="0.7"/><path d="M14,17L18,9 17,16Z" fill="none" stroke="#f04040" stroke-width="0.8"/></svg><svg class="a" style="left:1463px;top:173px" width="28" height="28" viewBox="0 0 28 28"><rect x="0.5" y="0.5" width="27" height="27" fill="#fff" stroke="#333" stroke-width="1"/><rect x="0" y="0" width="28" height="5" fill="#000"/><rect x="1.5" y="1" width="3" height="3" fill="#fff"/><rect x="7" y="9" width="10" height="9" fill="#f8efc8" stroke="#555" stroke-width="0.8"/><circle cx="17" cy="17" r="4.5" fill="#f8efc8" stroke="#555" stroke-width="0.8"/></svg><svg class="a" style="left:1463px;top:220px" width="28" height="28" viewBox="0 0 28 28"><rect x="0.5" y="0.5" width="27" height="27" fill="#fff" stroke="#333" stroke-width="1"/><rect x="0" y="0" width="28" height="5" fill="#000"/><rect x="1.5" y="1" width="3" height="3" fill="#fff"/><rect x="6" y="10" width="16" height="11" rx="2" fill="#f6f6f6" stroke="#b8c8e0" stroke-width="0.8"/></svg><svg class="a" style="left:1463px;top:276px" width="28" height="28" viewBox="0 0 28 28"><rect x="0.5" y="0.5" width="27" height="27" fill="#fff" stroke="#333" stroke-width="1"/><rect x="0" y="0" width="28" height="5" fill="#000"/><rect x="1.5" y="1" width="3" height="3" fill="#fff"/><rect x="4" y="9" width="4" height="3" fill="#111"/><rect x="10" y="9" width="13" height="3" fill="#fff" stroke="#444" stroke-width="0.7"/><rect x="4" y="14" width="4" height="3" fill="#111"/><rect x="10" y="14" width="13" height="3" fill="#fff" stroke="#444" stroke-width="0.7"/><rect x="4" y="19" width="4" height="3" fill="#111"/><rect x="10" y="19" width="13" height="3" fill="#fff" stroke="#444" stroke-width="0.7"/></svg><svg class="a" style="left:1463px;top:322px" width="28" height="28" viewBox="0 0 28 28"><rect x="0.5" y="0.5" width="27" height="27" fill="#fff" stroke="#333" stroke-width="1"/><rect x="0" y="0" width="28" height="5" fill="#000"/><rect x="1.5" y="1" width="3" height="3" fill="#fff"/><path d="M5,9H23L16,16V23H12V16Z" fill="#a0a0a0" stroke="#555" stroke-width="0.6"/><ellipse cx="14" cy="10" rx="9" ry="1.6" fill="#ccc" stroke="#555" stroke-width="0.6"/></svg><svg class="a" style="left:1463px;top:368px" width="28" height="28" viewBox="0 0 28 28"><rect x="0.5" y="0.5" width="27" height="27" fill="#fff" stroke="#333" stroke-width="1"/><rect x="0" y="0" width="28" height="5" fill="#000"/><rect x="1.5" y="1" width="3" height="3" fill="#fff"/><path d="M6,10V22L12,19H19V13H12Z" fill="#fff" stroke="#555" stroke-width="0.8"/><rect x="12" y="13" width="10" height="6" fill="#888"/><path d="M3,16H25" stroke="#f07070" stroke-width="0.6" stroke-dasharray="1.5 1"/></svg><svg class="a" style="left:1463px;top:424px" width="28" height="28" viewBox="0 0 28 28"><rect x="0.5" y="0.5" width="27" height="27" fill="#fff" stroke="#333" stroke-width="1"/><rect x="0" y="0" width="28" height="5" fill="#000"/><rect x="1.5" y="1" width="3" height="3" fill="#fff"/><g fill="#777"><rect x="3" y="8" width="12" height="1"/><rect x="3" y="11" width="12" height="1"/><rect x="3" y="14" width="13" height="1"/><rect x="3" y="17" width="13" height="1"/></g><rect x="1" y="22" width="26" height="5" fill="#fff" stroke="#333" stroke-width="0.8"/><rect x="8" y="24" width="14" height="1" fill="#444"/></svg><svg class="a" style="left:1463px;top:471px" width="28" height="28" viewBox="0 0 28 28"><rect x="0.5" y="0.5" width="27" height="27" fill="#fff" stroke="#333" stroke-width="1"/><rect x="0" y="0" width="28" height="5" fill="#000"/><rect x="1.5" y="1" width="3" height="3" fill="#fff"/><rect x="8" y="9" width="12" height="15" fill="#c58a2e" stroke="#7a5010" stroke-width="0.6"/><rect x="10" y="11" width="8" height="11" fill="#fafafa"/><rect x="11" y="7.5" width="6" height="3" fill="#888"/><g fill="#aaa"><rect x="11" y="13" width="6" height="0.8"/><rect x="11" y="15" width="6" height="0.8"/><rect x="11" y="17" width="6" height="0.8"/></g></svg>
<div id="status" class="a">
<div class="a" style="left:2px;top:8px;font-size:10px;letter-spacing:0.22px;color:#1e1e1e;white-space:pre">-2.4,84.6</div>
<div class="a" style="left:2px;top:28px;font-size:10px;letter-spacing:0.22px;color:#1e1e1e;white-space:pre">@-12.4,4.6</div>
<div class="a" style="left:253px;top:5px;width:1px;height:39px;background:#8a8a8a"></div>
<div class="a" style="left:256px;top:8px;font-size:10px;letter-spacing:0.22px;color:#1e1e1e;white-space:pre">84.634&lt;92°</div>
<div class="a" style="left:256px;top:28px;font-size:10px;letter-spacing:0.22px;color:#1e1e1e;white-space:pre">@13.2257&lt;160°</div>
<div class="a" style="left:506px;top:19px;width:7px;height:7px;border-radius:50%;background:#c4c4c4"></div>
<div class="a" style="left:662px;top:18px;font-size:10px;letter-spacing:0.22px;color:#1e1e1e">Position</div>
<svg class="a" style="left:716px;top:7px" width="20" height="30" viewBox="0 0 20 30"><path d="M10,1.2C4.5,1.2 1.5,5 1.5,10V20C1.5,25 4.5,28.5 10,28.5 15.5,28.5 18.5,25 18.5,20V10C18.5,5 15.5,1.2 10,1.2Z" fill="#fff" stroke="#333" stroke-width="0.9"/><path d="M1.5,13.5C6,11.8 14,11.8 18.5,13.5M10,1.2V12.3" fill="none" stroke="#333" stroke-width="1"/><rect x="8.3" y="4" width="3.4" height="7" rx="1.7" fill="#fff" stroke="#333" stroke-width="0.8"/></svg>
<div class="a" style="left:753px;top:18px;font-size:10px;letter-spacing:0.22px;color:#1e1e1e">Cancel</div>
<div class="a" style="left:940px;top:19px;width:7px;height:7px;border-radius:50%;background:#c4c4c4"></div>
<div class="a" style="left:949px;top:17px;font-size:10px;letter-spacing:0.22px;color:#1e1e1e;white-space:pre">No entities selected.</div>
<div class="a" style="left:1269px;top:19px;width:7px;height:7px;border-radius:50%;background:#c4c4c4"></div>
</div>
<div class="a" style="left:1155px;top:108px;width:1px;height:691px;background:#b4b4b4"></div>
<!--CURSOR--><svg class="a" style="left:130px;top:40px" width="100" height="100" viewBox="130 40 100 100">
<defs><filter id="blr" x="-20%" y="-20%" width="140%" height="140%"><feGaussianBlur stdDeviation="1.3"/></filter></defs>
<circle cx="179.3" cy="88" r="34.5" fill="none" stroke="#fff" stroke-opacity="0.4" stroke-width="3" filter="url(#blr)"/>
<circle cx="179.3" cy="88" r="36" fill="none" stroke="#85a3c4" stroke-opacity="0.42" stroke-width="6.5" filter="url(#blr)"/>
<path d="M179.5,88V110.5L184.6,105.6 188.3,114.6 192.6,112.8 188.9,104.2 195.5,104Z" fill="#fff" stroke="#000" stroke-width="1.1" stroke-linejoin="miter"/>
</svg><!--/CURSOR-->
</body></html>
